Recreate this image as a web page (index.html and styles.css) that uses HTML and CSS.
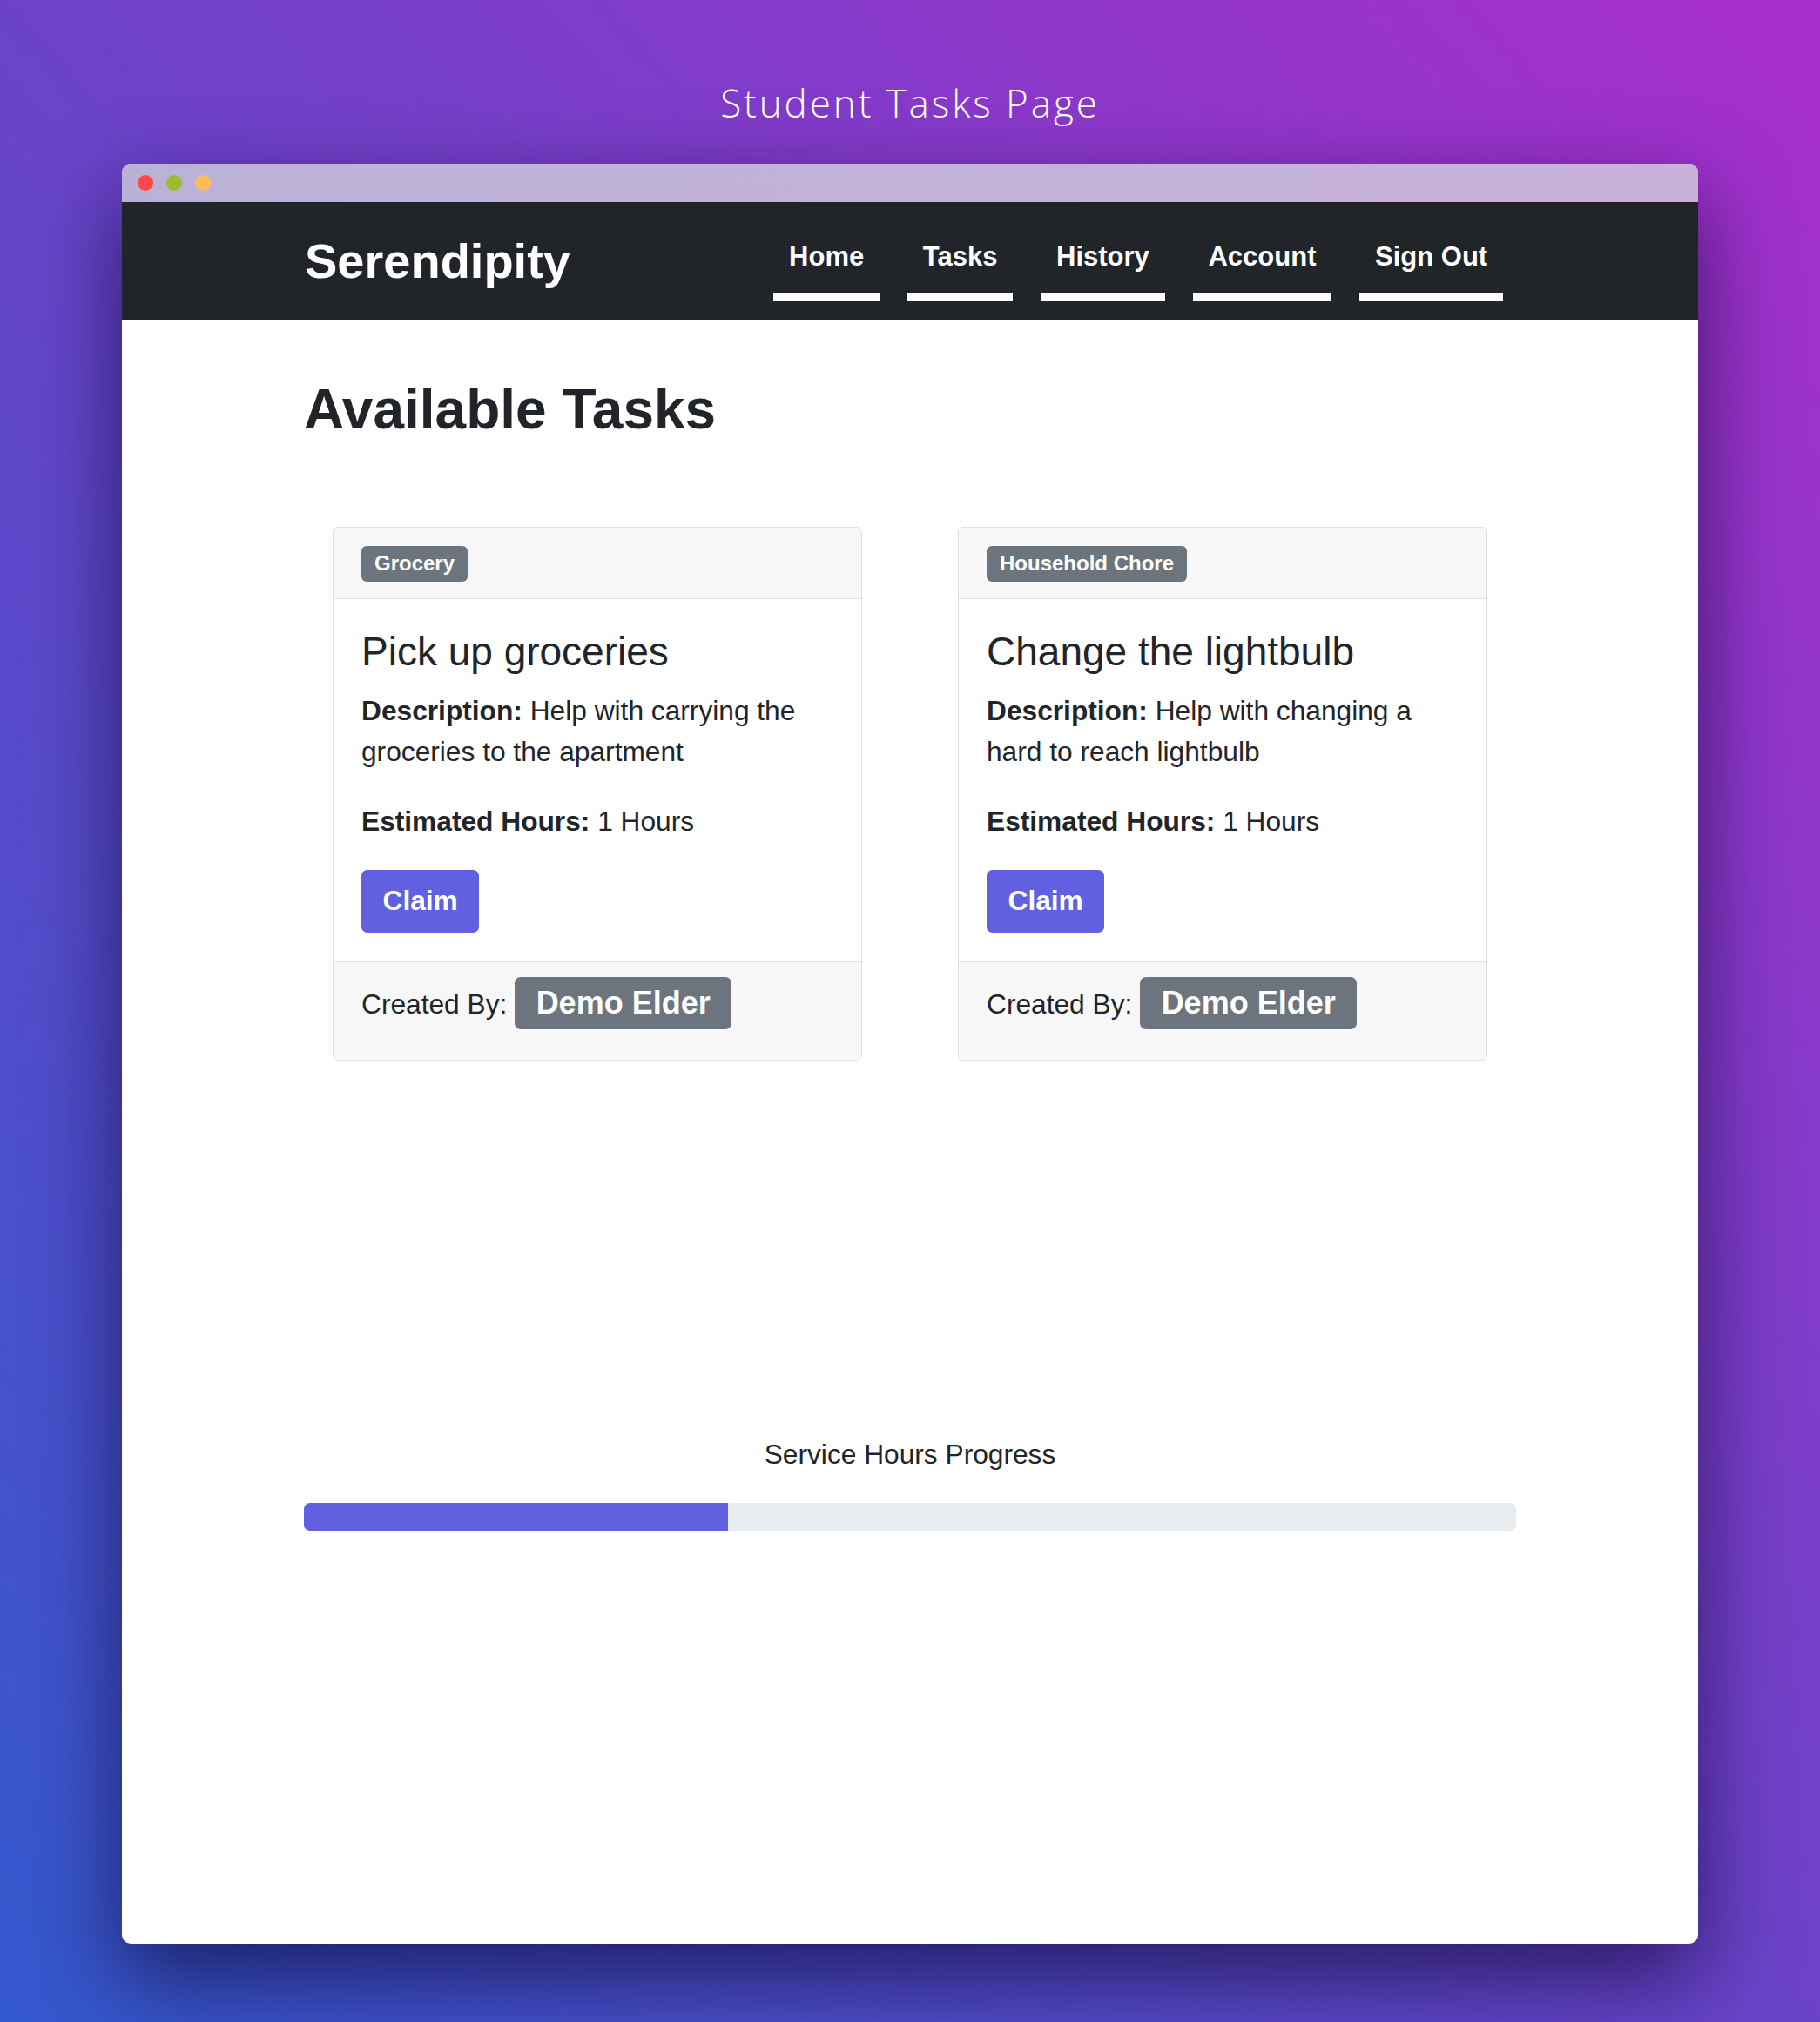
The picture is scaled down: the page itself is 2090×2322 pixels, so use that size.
FILE: index.html
```html
<!DOCTYPE html>
<html lang="en">
<head>
<meta charset="utf-8">
<title>Student Tasks Page</title>
<link rel="stylesheet" href="styles.css">
</head>
<body>
<div class="page">
  <h1 class="page-title">Student Tasks Page</h1>
  <div class="window">
    <div class="titlebar">
      <span class="dot dot-red"></span>
      <span class="dot dot-green"></span>
      <span class="dot dot-yellow"></span>
    </div>
    <nav class="navbar">
      <div class="container nav-inner">
        <a class="brand" href="#">Serendipity</a>
        <ul class="nav">
          <li><a class="nav-link" href="#">Home</a></li>
          <li><a class="nav-link" href="#">Tasks</a></li>
          <li><a class="nav-link" href="#">History</a></li>
          <li><a class="nav-link" href="#">Account</a></li>
          <li><a class="nav-link" href="#">Sign Out</a></li>
        </ul>
      </div>
    </nav>
    <main class="container">
      <h2 class="heading">Available Tasks</h2>
      <div class="cards">
        <div class="card">
          <div class="card-header"><span class="badge">Grocery</span></div>
          <div class="card-body">
            <h3 class="card-title">Pick up groceries</h3>
            <p class="card-text"><strong>Description:</strong> Help with carrying the groceries to the apartment</p>
            <p class="card-text card-hours"><strong>Estimated Hours:</strong> 1 Hours</p>
            <button class="btn">Claim</button>
          </div>
          <div class="card-footer">Created By: <span class="badge badge-lg">Demo Elder</span></div>
        </div>
        <div class="card">
          <div class="card-header"><span class="badge">Household Chore</span></div>
          <div class="card-body">
            <h3 class="card-title">Change the lightbulb</h3>
            <p class="card-text"><strong>Description:</strong> Help with changing a hard to reach lightbulb</p>
            <p class="card-text card-hours"><strong>Estimated Hours:</strong> 1 Hours</p>
            <button class="btn">Claim</button>
          </div>
          <div class="card-footer">Created By: <span class="badge badge-lg">Demo Elder</span></div>
        </div>
      </div>
      <section class="progress-section">
        <p class="progress-label">Service Hours Progress</p>
        <div class="progress"><div class="progress-bar" style="width: 35%"></div></div>
      </section>
    </main>
  </div>
</div>
</body>
</html>
```

FILE: styles.css
```css
html, body {
  margin: 0;
  padding: 0;
}

body {
  width: 2090px;
  height: 2322px;
  overflow: hidden;
  background: linear-gradient(to top right, #3358cd 0%, #6b43c9 50%, #a82ecc 100%);
  font-family: "Liberation Sans", Arial, Helvetica, sans-serif;
  color: #212529;
}

.page {
  width: 2090px;
  height: 2322px;
}

.page-title {
  margin: 0;
  height: 188px;
  box-sizing: border-box;
  padding-top: 92px;
  text-align: center;
  font-family: "Open Sans", "Lato", sans-serif;
  font-weight: 300;
  font-size: 44px;
  line-height: 52.8px;
  letter-spacing: 2.9px;
  color: #ffffff;
}

.window {
  margin-left: 140px;
  width: 1810px;
  height: 2044px;
  background: #ffffff;
  border-radius: 10px;
  overflow: hidden;
  box-shadow: 0 40px 100px rgba(10, 5, 45, 0.65);
}

.titlebar {
  height: 44px;
  display: flex;
  align-items: center;
  gap: 15px;
  padding-left: 18px;
  background: linear-gradient(to right, #bab2d6, #c9b2d9);
}

.dot {
  width: 18px;
  height: 18px;
  border-radius: 50%;
}

.dot-red { background: #fc4848; }
.dot-green { background: #9cbd32; }
.dot-yellow { background: #ffbb55; }

.container {
  width: 1392px;
  margin: 0 auto;
}

.navbar {
  height: 136px;
  background: #212529;
}

.nav-inner {
  height: 100%;
  display: flex;
  align-items: center;
  justify-content: space-between;
}

.brand {
  font-size: 56px;
  font-weight: 700;
  line-height: 66px;
  color: #ffffff;
  text-decoration: none;
  margin-left: 1px;
}

.nav {
  list-style: none;
  margin: 0 15px 0 0;
  padding: 0;
  display: flex;
  gap: 32px;
}

.nav-link {
  display: block;
  padding: 18px 17.8px 17.5px;
  font-size: 31px;
  font-weight: 700;
  line-height: 46.5px;
  color: #ffffff;
  text-decoration: none;
  border-bottom: 10px solid #ffffff;
}

.heading {
  margin: 65px 0 96px;
  font-size: 64px;
  font-weight: 700;
  line-height: 75.6px;
  color: #212529;
}

.cards {
  display: flex;
  justify-content: space-between;
  padding: 0 33px;
  margin-bottom: 428.5px;
}

.card {
  width: 606px;
  border: 1px solid #dfdfdf;
  border-radius: 6px;
  overflow: hidden;
  background: #ffffff;
}

.card-header {
  padding: 21px 32px 19px;
  background: #f7f7f7;
  border-bottom: 1px solid #dfdfdf;
  display: flex;
}

.badge {
  display: inline-block;
  background: #6c757d;
  color: #ffffff;
  font-weight: 700;
  font-size: 24px;
  line-height: 24px;
  padding: 8.5px 15px;
  border-radius: 6px;
}

.badge-lg {
  font-size: 36px;
  line-height: 36px;
  padding: 12px 24.5px;
  border-radius: 7px;
}

.card-body {
  padding: 33px 32px;
}

.card-title {
  margin: 0 0 17px;
  font-size: 46px;
  font-weight: 400;
  line-height: 55.2px;
}

.card-text {
  margin: 0 0 32px;
  font-size: 31.7px;
  line-height: 47.5px;
}

.card-hours {
  margin-bottom: 32px;
}

.btn {
  display: block;
  border: none;
  background: #6060e0;
  color: #ffffff;
  font-family: inherit;
  font-weight: 700;
  font-size: 31.7px;
  line-height: 47.5px;
  padding: 12px 24.5px;
  border-radius: 6.6px;
}

.card-footer {
  padding: 17.5px 32px 35px;
  background: #f7f7f7;
  border-top: 1px solid #dfdfdf;
  font-size: 31.7px;
  line-height: 47.5px;
}

.progress-label {
  margin: 0 0 32px;
  text-align: center;
  font-size: 31.7px;
  line-height: 47.5px;
}

.progress {
  height: 32px;
  background: #e9ecef;
  border-radius: 7px;
  overflow: hidden;
  display: flex;
}

.progress-bar {
  height: 100%;
  background: #6060e0;
}
```
